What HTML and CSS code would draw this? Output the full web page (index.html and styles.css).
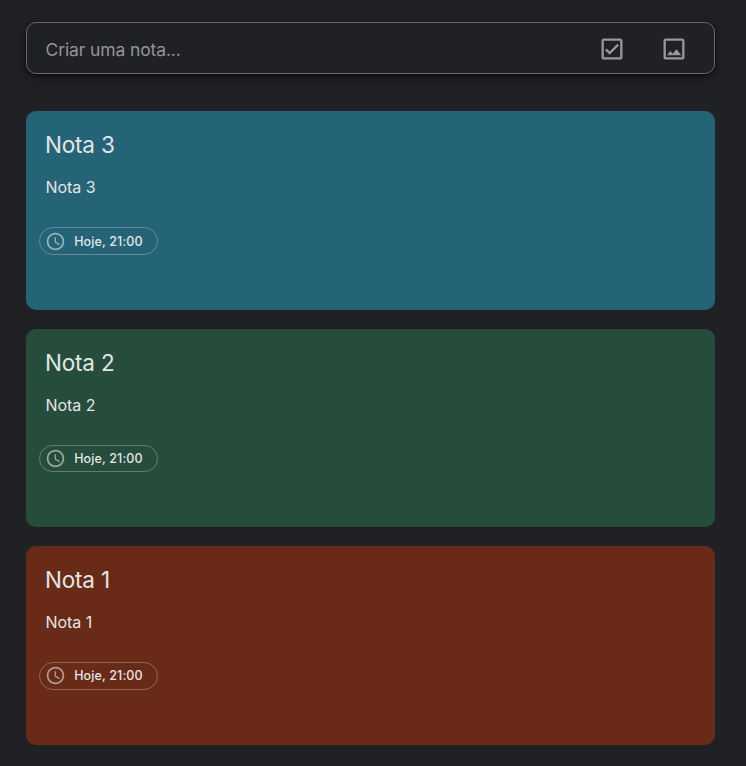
FILE: index.html
```html
<!DOCTYPE html>
<html lang="pt">
<head>
<meta charset="utf-8">
<title>Notas</title>
<link rel="stylesheet" href="styles.css">
</head>
<body>
<svg class="defs" aria-hidden="true">
  <symbol id="clock" viewBox="0 0 24 24"><path fill="currentColor" d="M11.99 2C6.47 2 2 6.48 2 12s4.47 10 9.99 10C17.52 22 22 17.52 22 12S17.52 2 11.99 2zM12 20c-4.42 0-8-3.58-8-8s3.58-8 8-8 8 3.58 8 8-3.58 8-8 8zm.5-13H11v6l5.25 3.15.75-1.23-4.5-2.67z"/></symbol>
</svg>
<main class="page">
  <div class="composer">
    <span class="placeholder">Criar uma nota...</span>
    <svg class="tool" viewBox="0 0 24 24"><path fill="currentColor" d="M19 3H5c-1.1 0-2 .9-2 2v14c0 1.1.9 2 2 2h14c1.1 0 2-.9 2-2V5c0-1.1-.9-2-2-2zm0 16H5V5h14v14zM17.99 9l-1.41-1.42-6.59 6.59-2.58-2.57-1.42 1.41 4 3.99z"/></svg>
    <svg class="tool" viewBox="0 0 24 24"><path fill="currentColor" d="M19 3H5c-1.1 0-2 .9-2 2v14c0 1.1.9 2 2 2h14c1.1 0 2-.9 2-2V5c0-1.1-.9-2-2-2zm0 16H5V5h14v14zM6 17.400l2.800-3.700 2 2.300 3.300-3.800L18.300 17.400z"/></svg>
  </div>
  <article class="note blue">
    <h2>Nota 3</h2>
    <p>Nota 3</p>
    <div class="chip"><svg viewBox="0 0 24 24"><use href="#clock"/></svg><span>Hoje, 21:00</span></div>
  </article>
  <article class="note green">
    <h2>Nota 2</h2>
    <p>Nota 2</p>
    <div class="chip"><svg viewBox="0 0 24 24"><use href="#clock"/></svg><span>Hoje, 21:00</span></div>
  </article>
  <article class="note red">
    <h2>Nota 1</h2>
    <p>Nota 1</p>
    <div class="chip"><svg viewBox="0 0 24 24"><use href="#clock"/></svg><span>Hoje, 21:00</span></div>
  </article>
</main>
</body>
</html>
```
FILE: styles.css
```css
* { box-sizing: border-box; }
body {
  margin: 0;
  background: #202124;
  color: #e2e5e7;
  font-family: Inter, "Liberation Sans", sans-serif;
}
.defs { display: none; }
.page {
  height: 766px;
  padding: 22px 30.6px 0 26px;
  overflow: hidden;
}
.composer {
  display: flex;
  align-items: center;
  height: 52.4px;
  margin-bottom: 37px;
  padding: 2px 26.6px 0 18.5px;
  border: 1px solid #66686a;
  border-radius: 10px;
  box-shadow: 0 1px 3px rgba(0, 0, 0, .6), 0 3px 8px 2px rgba(0, 0, 0, .3);
}
.placeholder {
  flex: 1;
  font-size: 17.5px;
  letter-spacing: -.12px;
  color: #949596;
}
.tool {
  width: 28px;
  height: 28px;
  margin-left: 34px;
  color: #97989a;
}
.note {
  height: 198.7px;
  margin-bottom: 18.6px;
  padding: 19px 13px 0;
  border-radius: 10px;
}
.blue { background: #256377; }
.green { background: #264d3b; }
.red { background: #692b17; }
.note h2 {
  margin: 0 6px;
  font-size: 22.5px;
  line-height: 30px;
  font-weight: 400;
  letter-spacing: -.2px;
}
.note p {
  margin: 15px 6.4px 28px;
  font-size: 16px;
  line-height: 24px;
}
.chip {
  display: flex;
  align-items: center;
  width: 118.6px;
  height: 27.6px;
  padding-left: 4.5px;
  border: 1px solid rgba(232, 234, 237, .3);
  border-radius: 14px;
  font-size: 12.5px;
  font-weight: 500;
  letter-spacing: .12px;
}
.chip svg {
  width: 21px;
  height: 21px;
  margin-right: 8.7px;
  opacity: .6;
}
```
